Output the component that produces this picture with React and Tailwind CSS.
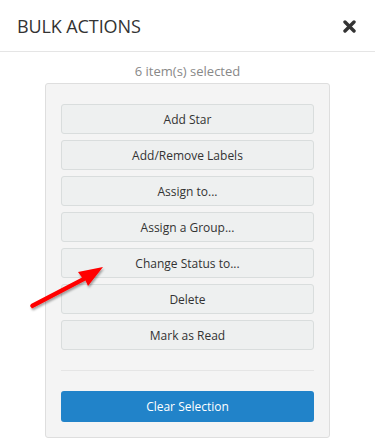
const actions = [
  'Add Star',
  'Add/Remove Labels',
  'Assign to...',
  'Assign a Group...',
  'Change Status to...',
  'Delete',
  'Mark as Read',
]

export default function App() {
  return (
    <div className="relative w-[375px] h-[443px] bg-white overflow-hidden" style={{ fontFamily: '"Open Sans", Arial, sans-serif' }}>
      {/* Header */}
      <div className="flex items-center justify-between h-[52px] pl-[17px] pr-[19px] border-b border-[#e5e5e5]">
        <h1 className="text-[18px] font-normal text-[#333] tracking-[-0.1px] pt-[1px]">BULK ACTIONS</h1>
        <svg width="13" height="13" viewBox="0 0 13 13" className="mt-[1px]">
          <path d="M2 2 L11 11 M11 2 L2 11" stroke="#333" strokeWidth="3.4" strokeLinecap="round" />
        </svg>
      </div>

      <p className="text-center text-[13px] text-[#888] mt-[10px] leading-[18px]">6 item(s) selected</p>

      {/* Actions panel */}
      <div className="mx-[45px] w-[285px] mt-[3px] bg-[#f4f4f4] border border-[#dedede] rounded-[3px] pt-[20px] px-[15px] pb-[15px]">
        <div className="flex flex-col gap-[6px]">
          {actions.map(a => (
            <button
              key={a}
              className="h-[30px] w-full pt-[1px] bg-[#eef0f0] border border-[#d9dddd] rounded-[3px] text-[12px] text-[#333]"
            >
              {a}
            </button>
          ))}
        </div>
        <div className="border-t border-[#e5e5e5] mt-[20px] mb-[20px]" />
        <button className="h-[31px] w-full pt-[1px] bg-[#2183c9] rounded-[3px] text-[12px] text-white">
          Clear Selection
        </button>
      </div>

      {/* Red arrow annotation */}
      <svg className="absolute left-0 top-0 pointer-events-none" width="375" height="443">
        <defs>
          <filter id="sh" x="-20%" y="-20%" width="140%" height="140%">
            <feDropShadow dx="1" dy="2" stdDeviation="1.2" floodColor="#000" floodOpacity="0.35" />
          </filter>
        </defs>
        <g filter="url(#sh)">
          <path d="M30 306 L31 304 L82 277.5 L78 272 L103 267 L88 286 L85.5 280.5 L32 308.5 Z" fill="#f00" />
        </g>
      </svg>
    </div>
  )
}
